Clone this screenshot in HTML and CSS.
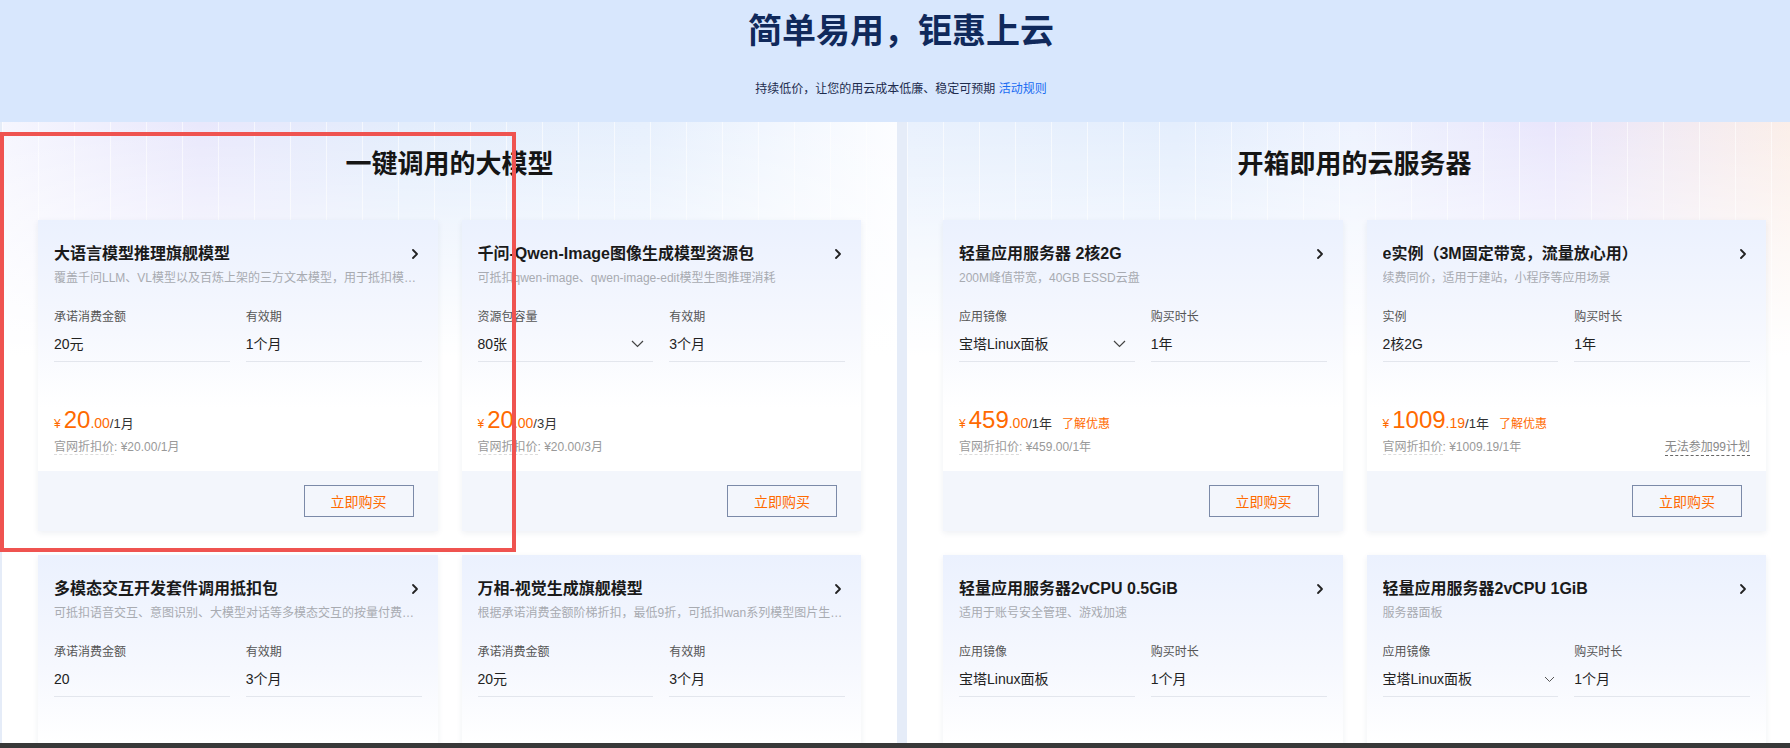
FILE: index.html
```html
<!DOCTYPE html>
<html lang="zh-CN">
<head>
<meta charset="utf-8">
<title>简单易用，钜惠上云</title>
<link rel="stylesheet" href="styles.css">
</head>
<body>
<div class="page">
  <header class="hero">
    <h1 class="hero-title">简单易用，钜惠上云</h1>
    <p class="hero-sub">持续低价，让您的用云成本低廉、稳定可预期 <a class="hero-link" href="#">活动规则</a></p>
  </header>

  <main class="panels">
    <section class="panel panel-left">
      <h2 class="panel-title">一键调用的大模型</h2>
      <div class="cards">

        <div class="card">
          <div class="card-main">
            <div class="card-head">
              <span class="card-title">大语言模型推理旗舰模型</span>
              <svg class="card-arrow" width="8" height="12" viewBox="0 0 8 12"><path d="M2 2l4 4-4 4" stroke="#222" stroke-width="1.8" fill="none" stroke-linecap="round" stroke-linejoin="round"/></svg>
            </div>
            <div class="card-desc">覆盖千问LLM、VL模型以及百炼上架的三方文本模型，用于抵扣模型推理调用产生的费用</div>
            <div class="fields">
              <div class="field"><div class="field-label">承诺消费金额</div><div class="field-value"><span>20元</span></div></div>
              <div class="field"><div class="field-label">有效期</div><div class="field-value"><span>1个月</span></div></div>
            </div>
            <div class="price"><span class="price-yen">¥</span><span class="price-int">20</span><span class="price-dec">.00</span><span class="price-unit">/1月</span></div>
            <div class="official"><span><span class="official-label">官网折扣价</span>: ¥20.00/1月</span></div>
          </div>
          <div class="card-foot"><button class="buy-btn">立即购买</button></div>
        </div>

        <div class="card">
          <div class="card-main">
            <div class="card-head">
              <span class="card-title">千问-Qwen-Image图像生成模型资源包</span>
              <svg class="card-arrow" width="8" height="12" viewBox="0 0 8 12"><path d="M2 2l4 4-4 4" stroke="#222" stroke-width="1.8" fill="none" stroke-linecap="round" stroke-linejoin="round"/></svg>
            </div>
            <div class="card-desc">可抵扣qwen-image、qwen-image-edit模型生图推理消耗</div>
            <div class="fields">
              <div class="field"><div class="field-label">资源包容量</div><div class="field-value"><span>80张</span><svg class="dropdown" width="13" height="8" viewBox="0 0 13 8"><path d="M1 1l5.5 5.5L12 1" stroke="#444" stroke-width="1.2" fill="none"/></svg></div></div>
              <div class="field"><div class="field-label">有效期</div><div class="field-value"><span>3个月</span></div></div>
            </div>
            <div class="price"><span class="price-yen">¥</span><span class="price-int">20</span><span class="price-dec">.00</span><span class="price-unit">/3月</span></div>
            <div class="official"><span><span class="official-label">官网折扣价</span>: ¥20.00/3月</span></div>
          </div>
          <div class="card-foot"><button class="buy-btn">立即购买</button></div>
        </div>

        <div class="card">
          <div class="card-main">
            <div class="card-head">
              <span class="card-title">多模态交互开发套件调用抵扣包</span>
              <svg class="card-arrow" width="8" height="12" viewBox="0 0 8 12"><path d="M2 2l4 4-4 4" stroke="#222" stroke-width="1.8" fill="none" stroke-linecap="round" stroke-linejoin="round"/></svg>
            </div>
            <div class="card-desc">可抵扣语音交互、意图识别、大模型对话等多模态交互的按量付费账单</div>
            <div class="fields">
              <div class="field"><div class="field-label">承诺消费金额</div><div class="field-value"><span>20</span></div></div>
              <div class="field"><div class="field-label">有效期</div><div class="field-value"><span>3个月</span></div></div>
            </div>
            <div class="price"><span class="price-yen">¥</span><span class="price-int">20</span><span class="price-dec">.00</span><span class="price-unit">/3月</span></div>
            <div class="official"><span><span class="official-label">官网折扣价</span>: ¥20.00/3月</span></div>
          </div>
          <div class="card-foot"><button class="buy-btn">立即购买</button></div>
        </div>

        <div class="card">
          <div class="card-main">
            <div class="card-head">
              <span class="card-title">万相-视觉生成旗舰模型</span>
              <svg class="card-arrow" width="8" height="12" viewBox="0 0 8 12"><path d="M2 2l4 4-4 4" stroke="#222" stroke-width="1.8" fill="none" stroke-linecap="round" stroke-linejoin="round"/></svg>
            </div>
            <div class="card-desc">根据承诺消费金额阶梯折扣，最低9折，可抵扣wan系列模型图片生成与视频生成费用</div>
            <div class="fields">
              <div class="field"><div class="field-label">承诺消费金额</div><div class="field-value"><span>20元</span></div></div>
              <div class="field"><div class="field-label">有效期</div><div class="field-value"><span>3个月</span></div></div>
            </div>
            <div class="price"><span class="price-yen">¥</span><span class="price-int">20</span><span class="price-dec">.00</span><span class="price-unit">/3月</span></div>
            <div class="official"><span><span class="official-label">官网折扣价</span>: ¥20.00/3月</span></div>
          </div>
          <div class="card-foot"><button class="buy-btn">立即购买</button></div>
        </div>

      </div>
    </section>

    <section class="panel panel-right">
      <h2 class="panel-title">开箱即用的云服务器</h2>
      <div class="cards">

        <div class="card">
          <div class="card-main">
            <div class="card-head">
              <span class="card-title">轻量应用服务器 2核2G</span>
              <svg class="card-arrow" width="8" height="12" viewBox="0 0 8 12"><path d="M2 2l4 4-4 4" stroke="#222" stroke-width="1.8" fill="none" stroke-linecap="round" stroke-linejoin="round"/></svg>
            </div>
            <div class="card-desc">200M峰值带宽，40GB ESSD云盘</div>
            <div class="fields">
              <div class="field"><div class="field-label">应用镜像</div><div class="field-value"><span>宝塔Linux面板</span><svg class="dropdown" width="13" height="8" viewBox="0 0 13 8"><path d="M1 1l5.5 5.5L12 1" stroke="#444" stroke-width="1.2" fill="none"/></svg></div></div>
              <div class="field"><div class="field-label">购买时长</div><div class="field-value"><span>1年</span></div></div>
            </div>
            <div class="price"><span class="price-yen">¥</span><span class="price-int">459</span><span class="price-dec">.00</span><span class="price-unit">/1年</span><span class="price-promo">了解优惠</span></div>
            <div class="official"><span><span class="official-label">官网折扣价</span>: ¥459.00/1年</span></div>
          </div>
          <div class="card-foot"><button class="buy-btn">立即购买</button></div>
        </div>

        <div class="card">
          <div class="card-main">
            <div class="card-head">
              <span class="card-title">e实例（3M固定带宽，流量放心用）</span>
              <svg class="card-arrow" width="8" height="12" viewBox="0 0 8 12"><path d="M2 2l4 4-4 4" stroke="#222" stroke-width="1.8" fill="none" stroke-linecap="round" stroke-linejoin="round"/></svg>
            </div>
            <div class="card-desc">续费同价，适用于建站，小程序等应用场景</div>
            <div class="fields">
              <div class="field"><div class="field-label">实例</div><div class="field-value"><span>2核2G</span></div></div>
              <div class="field"><div class="field-label">购买时长</div><div class="field-value"><span>1年</span></div></div>
            </div>
            <div class="price"><span class="price-yen">¥</span><span class="price-int">1009</span><span class="price-dec">.19</span><span class="price-unit">/1年</span><span class="price-promo">了解优惠</span></div>
            <div class="official"><span><span class="official-label">官网折扣价</span>: ¥1009.19/1年</span><span class="no-plan">无法参加99计划</span></div>
          </div>
          <div class="card-foot"><button class="buy-btn">立即购买</button></div>
        </div>

        <div class="card">
          <div class="card-main">
            <div class="card-head">
              <span class="card-title">轻量应用服务器2vCPU 0.5GiB</span>
              <svg class="card-arrow" width="8" height="12" viewBox="0 0 8 12"><path d="M2 2l4 4-4 4" stroke="#222" stroke-width="1.8" fill="none" stroke-linecap="round" stroke-linejoin="round"/></svg>
            </div>
            <div class="card-desc">适用于账号安全管理、游戏加速</div>
            <div class="fields">
              <div class="field"><div class="field-label">应用镜像</div><div class="field-value"><span>宝塔Linux面板</span></div></div>
              <div class="field"><div class="field-label">购买时长</div><div class="field-value"><span>1个月</span></div></div>
            </div>
            <div class="price"><span class="price-yen">¥</span><span class="price-int">9</span><span class="price-dec">.90</span><span class="price-unit">/1个月</span></div>
            <div class="official"><span><span class="official-label">官网折扣价</span>: ¥9.90/1个月</span></div>
          </div>
          <div class="card-foot"><button class="buy-btn">立即购买</button></div>
        </div>

        <div class="card">
          <div class="card-main">
            <div class="card-head">
              <span class="card-title">轻量应用服务器2vCPU 1GiB</span>
              <svg class="card-arrow" width="8" height="12" viewBox="0 0 8 12"><path d="M2 2l4 4-4 4" stroke="#222" stroke-width="1.8" fill="none" stroke-linecap="round" stroke-linejoin="round"/></svg>
            </div>
            <div class="card-desc">服务器面板</div>
            <div class="fields">
              <div class="field"><div class="field-label">应用镜像</div><div class="field-value"><span>宝塔Linux面板</span><svg class="dropdown dropdown-tight" width="11" height="7" viewBox="0 0 11 7"><path d="M1 1l4.5 4.5L10 1" stroke="#555" stroke-width="1" fill="none"/></svg></div></div>
              <div class="field"><div class="field-label">购买时长</div><div class="field-value"><span>1个月</span></div></div>
            </div>
            <div class="price"><span class="price-yen">¥</span><span class="price-int">15</span><span class="price-dec">.00</span><span class="price-unit">/1个月</span></div>
            <div class="official"><span><span class="official-label">官网折扣价</span>: ¥15.00/1个月</span></div>
          </div>
          <div class="card-foot"><button class="buy-btn">立即购买</button></div>
        </div>

      </div>
    </section>
  </main>
</div>

<div class="annotation"></div>
<div class="taskbar"></div>
</body>
</html>
```

FILE: styles.css
```css
* {
  box-sizing: border-box;
}

html,
body {
  margin: 0;
  padding: 0;
}

html {
  overflow: hidden;
}

body {
  width: 1802px;
  height: 748px;
  overflow: hidden;
  background: #e5ecf8;
  font-family: "Liberation Sans", "Noto Sans CJK SC", sans-serif;
  color: #222;
  position: relative;
}

.page {
  width: 1802px;
  height: 748px;
  overflow: hidden;
}

/* ---------- hero ---------- */
.hero {
  height: 122px;
  background: #d8e7fd;
  text-align: center;
  padding-top: 9px;
}

.hero-title {
  margin: 0;
  font-size: 34px;
  line-height: 44px;
  font-weight: 700;
  color: #10295b;
}

.hero-sub {
  margin: 27px 0 0;
  font-size: 12px;
  line-height: 18px;
  color: #1d2c4e;
}

.hero-link {
  color: #1a6cf2;
  text-decoration: none;
}

/* ---------- panels ---------- */
.panels {
  display: flex;
  gap: 10px;
  padding-left: 2px;
}

.panel {
  width: 895px;
  height: 626px;
  padding: 24px 36px 0;
  overflow: hidden;
}

.panel-left {
  background:
    linear-gradient(180deg, rgba(255, 255, 255, 0) 0px, rgba(255, 255, 255, 0.55) 120px, #fff 235px),
    repeating-linear-gradient(90deg, rgba(255, 255, 255, 0.6) 0 1px, transparent 1px 36px),
    linear-gradient(90deg, #f6f6fe 0%, #e9e8fc 22%, #e3edfc 45%, #e7f0fd 72%, #fcfdff 100%);
}

.panel-right {
  background:
    linear-gradient(180deg, rgba(255, 255, 255, 0) 0px, rgba(255, 255, 255, 0.55) 120px, #fff 235px),
    repeating-linear-gradient(90deg, rgba(255, 255, 255, 0.6) 0 1px, transparent 1px 36px),
    linear-gradient(90deg, #e9f1fd 0%, #e4eefd 30%, #eef3fe 50%, #e9e6fc 72%, #fcefe8 100%);
}

.panel-title {
  margin: 0 0 38px;
  text-align: center;
  font-size: 26px;
  line-height: 36px;
  font-weight: 700;
  color: #151515;
}

.cards {
  display: grid;
  grid-template-columns: minmax(0, 1fr) minmax(0, 1fr);
  gap: 24px;
}

/* ---------- card ---------- */
.card {
  min-width: 0;
  background: #fff;
  box-shadow: 0 2px 6px rgba(40, 60, 110, 0.08);
}

.card-main {
  padding: 22px 16px 15px;
  background: linear-gradient(180deg, #ebf1fe 0%, #f6f8fe 45%, #fff 75%);
}

.card-head {
  display: flex;
  align-items: center;
  justify-content: space-between;
  gap: 12px;
  height: 24px;
}

.card-title {
  min-width: 0;
  font-size: 16px;
  line-height: 24px;
  font-weight: 700;
  color: #1a1a1a;
  white-space: nowrap;
  overflow: hidden;
  text-overflow: ellipsis;
}

.card-arrow {
  margin-right: 3px;
  flex: none;
}

.card-desc {
  margin-top: 3px;
  font-size: 12px;
  line-height: 18px;
  color: #a8abb1;
  white-space: nowrap;
  overflow: hidden;
  text-overflow: ellipsis;
}

.fields {
  margin-top: 21px;
  display: grid;
  grid-template-columns: minmax(0, 1fr) minmax(0, 1fr);
  gap: 16px;
}

.field {
  min-width: 0;
  border-bottom: 1px solid #e3e6ed;
  padding-bottom: 7px;
}

.field-label {
  font-size: 12px;
  line-height: 18px;
  color: #555;
}

.field-value {
  margin-top: 8px;
  display: flex;
  align-items: center;
  justify-content: space-between;
  font-size: 14px;
  line-height: 20px;
  color: #222;
}

.dropdown {
  margin-right: 9px;
  flex: none;
}

.dropdown-tight {
  margin-right: 3px;
}

/* ---------- price ---------- */
.price {
  margin-top: 44px;
  height: 28px;
  line-height: 28px;
  display: flex;
  align-items: baseline;
  color: #ff6a00;
}

.price-yen {
  font-size: 12px;
  margin-right: 3px;
}

.price-int {
  font-size: 24px;
}

.price-dec {
  font-size: 14px;
}

.price-unit {
  font-size: 13px;
  color: #333;
}

.price-promo {
  font-size: 12px;
  margin-left: 10px;
  color: #ff6a00;
}

.official {
  margin-top: 5px;
  height: 17px;
  display: flex;
  justify-content: space-between;
  font-size: 12px;
  line-height: 16px;
  color: #999;
}

.official-label {
  border-bottom: 1px dashed #dcdcdc;
}

.no-plan {
  color: #888;
  border-bottom: 1px dashed #666;
}

/* ---------- footer ---------- */
.card-foot {
  height: 60px;
  background: #f3f6fc;
  display: flex;
  align-items: center;
  justify-content: flex-end;
  padding-right: 24px;
}

.buy-btn {
  width: 110px;
  height: 32px;
  border: 1px solid #7b8aa8;
  background: transparent;
  color: #ff6a00;
  font-size: 14px;
  font-family: inherit;
  padding: 0;
}

/* ---------- overlays ---------- */
.annotation {
  position: absolute;
  left: 0;
  top: 132px;
  width: 516px;
  height: 420px;
  border: 4px solid #ef5350;
}

.taskbar {
  position: fixed;
  left: 0;
  right: 0;
  bottom: 0;
  height: 5px;
  background: #383838;
}
```
